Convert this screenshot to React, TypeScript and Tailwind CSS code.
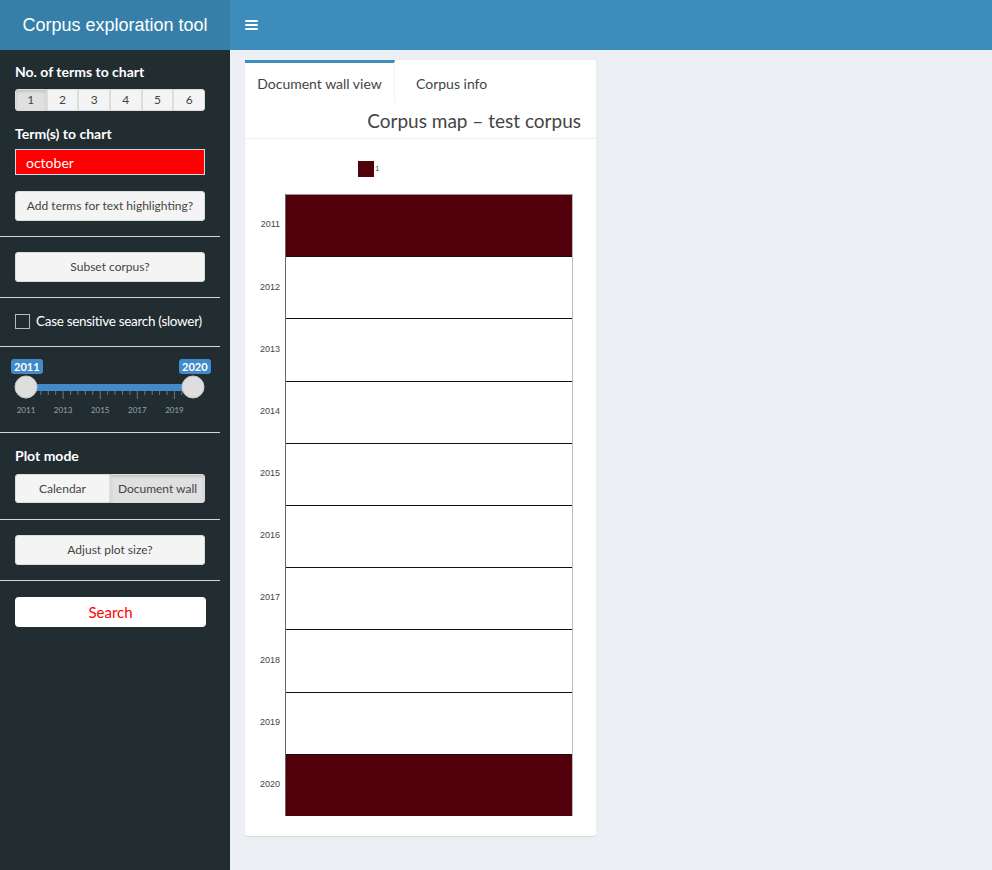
import React from "react";

const years = [2011, 2012, 2013, 2014, 2015, 2016, 2017, 2018, 2019, 2020];
const hits = new Set([2011, 2020]);

const font = { fontFamily: "Lato, 'Open Sans', sans-serif" };

function Divider() {
  return <div className="my-[15px] h-px w-[220px] bg-[#d2d6de]" />;
}

function SideButton({ label }: { label: string }) {
  return (
    <button className="h-[30px] w-[190px] rounded-[3px] border border-[#ddd] bg-[#f4f4f4] text-[12px] text-[#444]">
      {label}
    </button>
  );
}

function YearSlider() {
  const x0 = 26;
  const x1 = 193;
  const step = (x1 - x0) / 9;
  const ticks: number[] = [];
  for (let i = 0; i <= 22; i++) ticks.push(x0 + (i * 2 * step) / 5);
  return (
    <div className="relative h-[70px] w-[220px]">
      <span className="absolute left-[11px] top-[12px] rounded-[3px] bg-[#428bca] px-[3px] text-[11px] font-bold leading-[15px] text-white">
        2011
      </span>
      <span className="absolute left-[179px] top-[12px] rounded-[3px] bg-[#428bca] px-[3px] text-[11px] font-bold leading-[15px] text-white">
        2020
      </span>
      <svg className="absolute left-0 top-0" width="220" height="70">
        <rect x={x0} y={37} width={x1 - x0} height={7} fill="#428bca" />
        {ticks.map((x, i) => {
          const major = i % 5 === 0;
          return (
            <line
              key={i}
              x1={x}
              x2={x}
              y1={44}
              y2={major ? 52 : 48}
              stroke="#6b7780"
              strokeWidth={1}
            />
          );
        })}
        {[2011, 2013, 2015, 2017, 2019].map((y) => (
          <text
            key={y}
            x={x0 + (y - 2011) * step}
            y={66}
            textAnchor="middle"
            fontSize="8"
            fill="#9aa3a8"
            fontFamily="Lato, sans-serif"
          >
            {y}
          </text>
        ))}
        <circle cx={x0} cy={40} r={11} fill="#dedede" stroke="#c9c9c9" />
        <circle cx={x1} cy={40} r={11} fill="#dedede" stroke="#c9c9c9" />
      </svg>
    </div>
  );
}

function Sidebar() {
  return (
    <aside className="flex w-[230px] shrink-0 flex-col bg-[#222d32] pt-[13px] text-white" style={font}>
      <div className="px-[15px]">
        <div className="text-[14px] font-bold leading-[18px]">No. of terms to chart</div>
        <div className="mt-[8px] flex w-[190px]">
          {[1, 2, 3, 4, 5, 6].map((n) => (
            <button
              key={n}
              className={`h-[22px] flex-1 border border-[#ddd] text-[12px] text-[#444] first:rounded-l-[3px] last:rounded-r-[3px] ${
                n === 1 ? "bg-[#e0e0e0] shadow-[inset_0_2px_3px_rgba(0,0,0,0.12)]" : "bg-[#f4f4f4]"
              }`}
            >
              {n}
            </button>
          ))}
        </div>
        <div className="mt-[14px] text-[14px] font-bold leading-[18px]">Term(s) to chart</div>
        <div className="mt-[6px] flex h-[26px] w-[190px] items-center border border-[#d2d6de] bg-[#ff0000] px-[10px] text-[14px] text-white">
          october
        </div>
        <div className="mt-[16px]">
          <SideButton label="Add terms for text highlighting?" />
        </div>
      </div>
      <Divider />
      <div className="px-[15px]">
        <SideButton label="Subset corpus?" />
      </div>
      <Divider />
      <label className="flex items-center gap-[6px] whitespace-nowrap px-[15px] text-[13.5px] leading-[17px] tracking-[-0.3px]">
        <span className="h-[15px] w-[15px] shrink-0 border border-[#bbb] bg-transparent" />
        Case sensitive search (slower)
      </label>
      <div className="mt-[16px] h-px w-[220px] bg-[#d2d6de]" />
      <YearSlider />
      <div className="mt-[15px] h-px w-[220px] bg-[#d2d6de]" />
      <div className="px-[15px] pt-[14px]">
        <div className="text-[14px] font-bold leading-[18px]">Plot mode</div>
        <div className="mt-[9px] flex w-[190px]">
          <button className="h-[29px] flex-1 rounded-l-[3px] border border-[#ddd] bg-[#f4f4f4] text-[12px] text-[#444]">
            Calendar
          </button>
          <button className="h-[29px] flex-1 rounded-r-[3px] border border-[#ddd] bg-[#e0e0e0] text-[12px] text-[#444] shadow-[inset_0_2px_3px_rgba(0,0,0,0.12)]">
            Document wall
          </button>
        </div>
      </div>
      <div className="mb-[15px] mt-[16px] h-px w-[220px] bg-[#d2d6de]" />
      <div className="px-[15px]">
        <SideButton label="Adjust plot size?" />
      </div>
      <div className="mb-[16px] mt-[15px] h-px w-[220px] bg-[#d2d6de]" />
      <div className="px-[15px]">
        <button className="h-[30px] w-[191px] rounded-[4px] bg-white text-[15px] text-[#ff0000]">Search</button>
      </div>
    </aside>
  );
}

function Chart() {
  return (
    <div className="relative h-[697px]">
      <div className="absolute left-[113px] top-[22px] flex items-center gap-[1px]">
        <span className="h-[16px] w-[16px] bg-[#53000d]" />
        <span className="text-[8px] text-[#555]" style={{ fontFamily: "'Liberation Sans', Arial, sans-serif" }}>
          1
        </span>
      </div>
      <div className="absolute left-[10px] top-[55px] flex">
        <div className="flex w-[30px] flex-col pr-[5px]" style={{ fontFamily: "'Liberation Sans', Arial, sans-serif" }}>
          {years.map((y) => (
            <div key={y} className="flex h-[62.2px] items-center justify-end text-[9px] text-[#444]">
              {y}
            </div>
          ))}
        </div>
        <div className="flex w-[288px] flex-col border-l border-l-[#666] border-r border-r-[#bbb]">
          {years.map((y, i) => (
            <div
              key={y}
              className={`h-[62.2px] ${hits.has(y) ? "bg-[#53000d]" : "bg-white"} ${
                i > 0 ? "border-t border-t-[#111]" : "border-t border-t-[#999]"
              }`}
            />
          ))}
        </div>
      </div>
    </div>
  );
}

export default function App() {
  return (
    <div className="flex min-h-[870px] w-[992px] flex-col bg-[#ecf0f5]" style={font}>
      <header className="flex h-[50px] shrink-0">
        <div
          className="flex w-[230px] items-center justify-center bg-[#367fa9] text-[18px] text-white"
          style={{ fontFamily: "'Liberation Sans', Arial, sans-serif" }}
        >
          Corpus exploration tool
        </div>
        <div className="flex flex-1 items-center bg-[#3c8dbc] pl-[15px]">
          <svg width="13" height="12" viewBox="0 0 13 12">
            <rect x="0" y="1" width="13" height="2" rx="1" fill="white" />
            <rect x="0" y="5" width="13" height="2" rx="1" fill="white" />
            <rect x="0" y="9" width="13" height="2" rx="1" fill="white" />
          </svg>
        </div>
      </header>
      <div className="flex flex-1">
        <Sidebar />
        <main className="flex-1 pl-[15px] pt-[10px]">
          <div className="w-[351px] rounded-[3px] bg-white shadow-[0_1px_1px_rgba(0,0,0,0.1)]">
            <div className="flex h-[43px] items-stretch">
              <div className="flex w-[150px] items-center justify-center border-t-[3px] border-t-[#3c8dbc] border-r border-r-[#f4f4f4] text-[14px] text-[#444]">
                Document wall view
              </div>
              <div className="flex items-center px-[21px] pt-[3px] text-[14px] text-[#444]">Corpus info</div>
            </div>
            <div className="flex h-[36px] items-center justify-end border-b border-b-[#f0f0f0] pr-[15px] pt-[2px] text-[19px] text-[#444]">
              Corpus map – test corpus
            </div>
            <Chart />
          </div>
        </main>
      </div>
    </div>
  );
}
